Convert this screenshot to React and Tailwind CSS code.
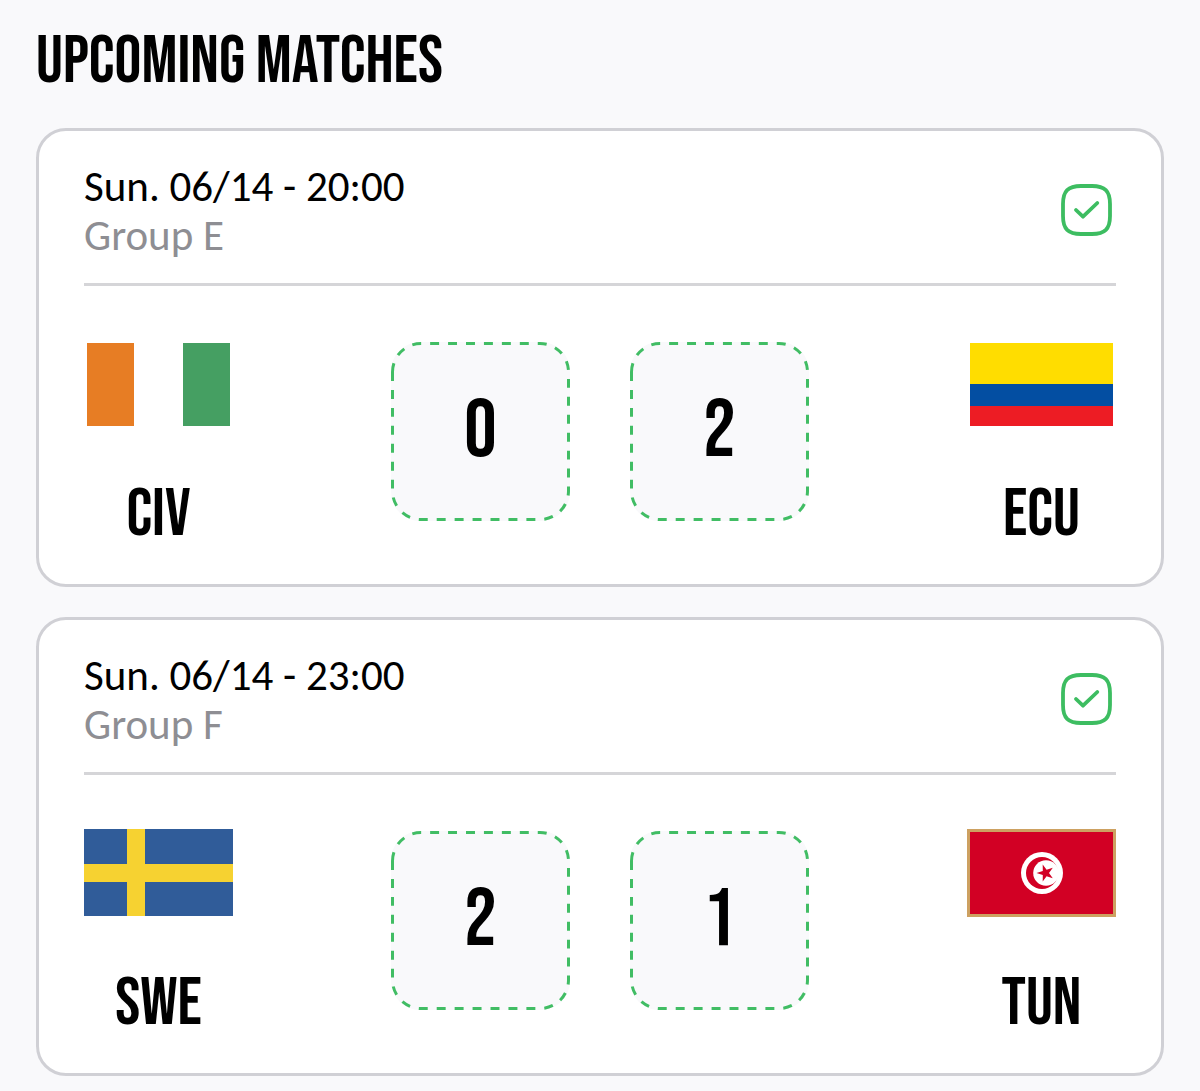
const condensed = "font-['Bebas_Neue','Liberation_Sans_Narrow',sans-serif]";

const matches = [
  {
    id: "civ-ecu",
    date: "Sun. 06/14 - 20:00",
    group: "Group E",
    home: { code: "CIV", score: "0" },
    away: { code: "ECU", score: "2" },
  },
  {
    id: "swe-tun",
    date: "Sun. 06/14 - 23:00",
    group: "Group F",
    home: { code: "SWE", score: "2" },
    away: { code: "TUN", score: "1" },
  },
];

const flags = {
  CIV: (
    <>
      <rect x="3" y="3" width="47" height="83" fill="#e77d24" />
      <rect x="99" y="3" width="47" height="83" fill="#459f62" />
    </>
  ),
  ECU: (
    <>
      <rect x="3" y="3" width="143" height="83" fill="#ffdd00" />
      <rect x="3" y="44" width="143" height="22" fill="#034ea2" />
      <rect x="3" y="66" width="143" height="20" fill="#ed1c24" />
    </>
  ),
  SWE: (
    <>
      <rect y="0" width="149" height="87" fill="#305c99" />
      <rect x="43" y="0" width="18" height="87" fill="#f6d231" />
      <rect y="35" width="149" height="18" fill="#f6d231" />
    </>
  ),
  TUN: (
    <>
      <rect width="149" height="88" fill="#cda161" />
      <rect x="3" y="3" width="143" height="82" fill="#d20024" />
      <circle cx="75" cy="44" r="21" fill="#fff" />
      <circle cx="75" cy="44" r="16" fill="#d20024" />
      <circle cx="79" cy="44" r="12.8" fill="#fff" />
      <path
        d="M69.5 44 L75.8 41.9 L75.7 35.4 L79.6 40.7 L85.8 38.7 L82 44 L85.8 49.3 L79.6 47.3 L75.7 52.6 L75.8 46.1 Z"
        fill="#d20024"
      />
    </>
  ),
};

const Flag = ({ code }) => (
  <svg viewBox="0 0 149 88" className="h-[88px] w-[149px]" aria-hidden="true">
    {flags[code]}
  </svg>
);

const Team = ({ code }) => (
  <div className="flex w-[149px] flex-col items-center">
    <Flag code={code} />
    <p className={`mt-[47px] text-[67px] leading-[80px] ${condensed}`}>
      {code}
    </p>
  </div>
);

const ScoreBox = ({ label, value }) => (
  <label className="relative mt-0.5 block size-[179px] rounded-[29px] bg-[#f9f9fb]">
    <svg
      viewBox="0 0 179 179"
      className="pointer-events-none absolute inset-0 size-full"
      fill="none"
      aria-hidden="true"
    >
      <path
        d="M1.5 30 A28.5 28.5 0 0 1 30 1.5 H149 A28.5 28.5 0 0 1 177.5 30 V149 A28.5 28.5 0 0 1 149 177.5 H30 A28.5 28.5 0 0 1 1.5 149 Z"
        pathLength="657"
        stroke="#41bd64"
        strokeWidth="3"
        strokeDasharray="9 9"
      />
    </svg>
    <input
      type="text"
      inputMode="numeric"
      aria-label={label}
      defaultValue={value}
      className={`size-full bg-transparent text-center text-[81px] outline-none ${condensed}`}
    />
  </label>
);

const SavedCheck = ({ label }) => (
  <label className="relative mt-[17px] block size-[60px]">
    <input
      type="checkbox"
      defaultChecked
      aria-label={label}
      className="block size-full appearance-none"
    />
    <svg
      viewBox="0 0 60 60"
      className="pointer-events-none absolute inset-0 size-full"
      fill="none"
      stroke="#3dbd61"
      strokeWidth="3.8"
      strokeLinecap="round"
      strokeLinejoin="round"
      aria-hidden="true"
    >
      <path d="M25 7 H36 C49 7 54 12 54 25 V37 C54 50 49 55 36 55 H25 C12 55 7 50 7 37 V25 C7 12 12 7 25 7 Z" />
      <path d="M20 31 L27 37.7 L41.3 24" />
    </svg>
  </label>
);

const MatchCard = ({ match }) => {
  const { date, group, home, away } = match;

  return (
    <article className="rounded-[30px] border-3 border-[#d0d0d5] bg-white px-[45px] pt-[31px] pb-[29px]">
      <header className="flex items-start justify-between border-b-3 border-[#d5d5d8] pb-[23px]">
        <div className="font-['Carlito','Lato',sans-serif] text-[43px] leading-[49px]">
          <p>{date}</p>
          <p className="text-[#8e8e93]">{group}</p>
        </div>
        <SavedCheck label={`${home.code} - ${away.code} saved`} />
      </header>

      <div className="flex items-start justify-between pt-[54px]">
        <Team code={home.code} />
        <div className="flex gap-[60px]">
          <ScoreBox label={`${home.code} score`} value={home.score} />
          <ScoreBox label={`${away.code} score`} value={away.score} />
        </div>
        <Team code={away.code} />
      </div>
    </article>
  );
};

const App = () => {
  return (
    <main className="min-h-screen bg-[#f9f9fb] px-9 pt-[22px] pb-4 text-black">
      <h1 className={`text-[67px] leading-[80px] ${condensed}`}>
        UPCOMING MATCHES
      </h1>
      <div className="mt-[26px] flex flex-col gap-[30px]">
        {matches.map((match) => (
          <MatchCard key={match.id} match={match} />
        ))}
      </div>
    </main>
  );
};

export default App;
